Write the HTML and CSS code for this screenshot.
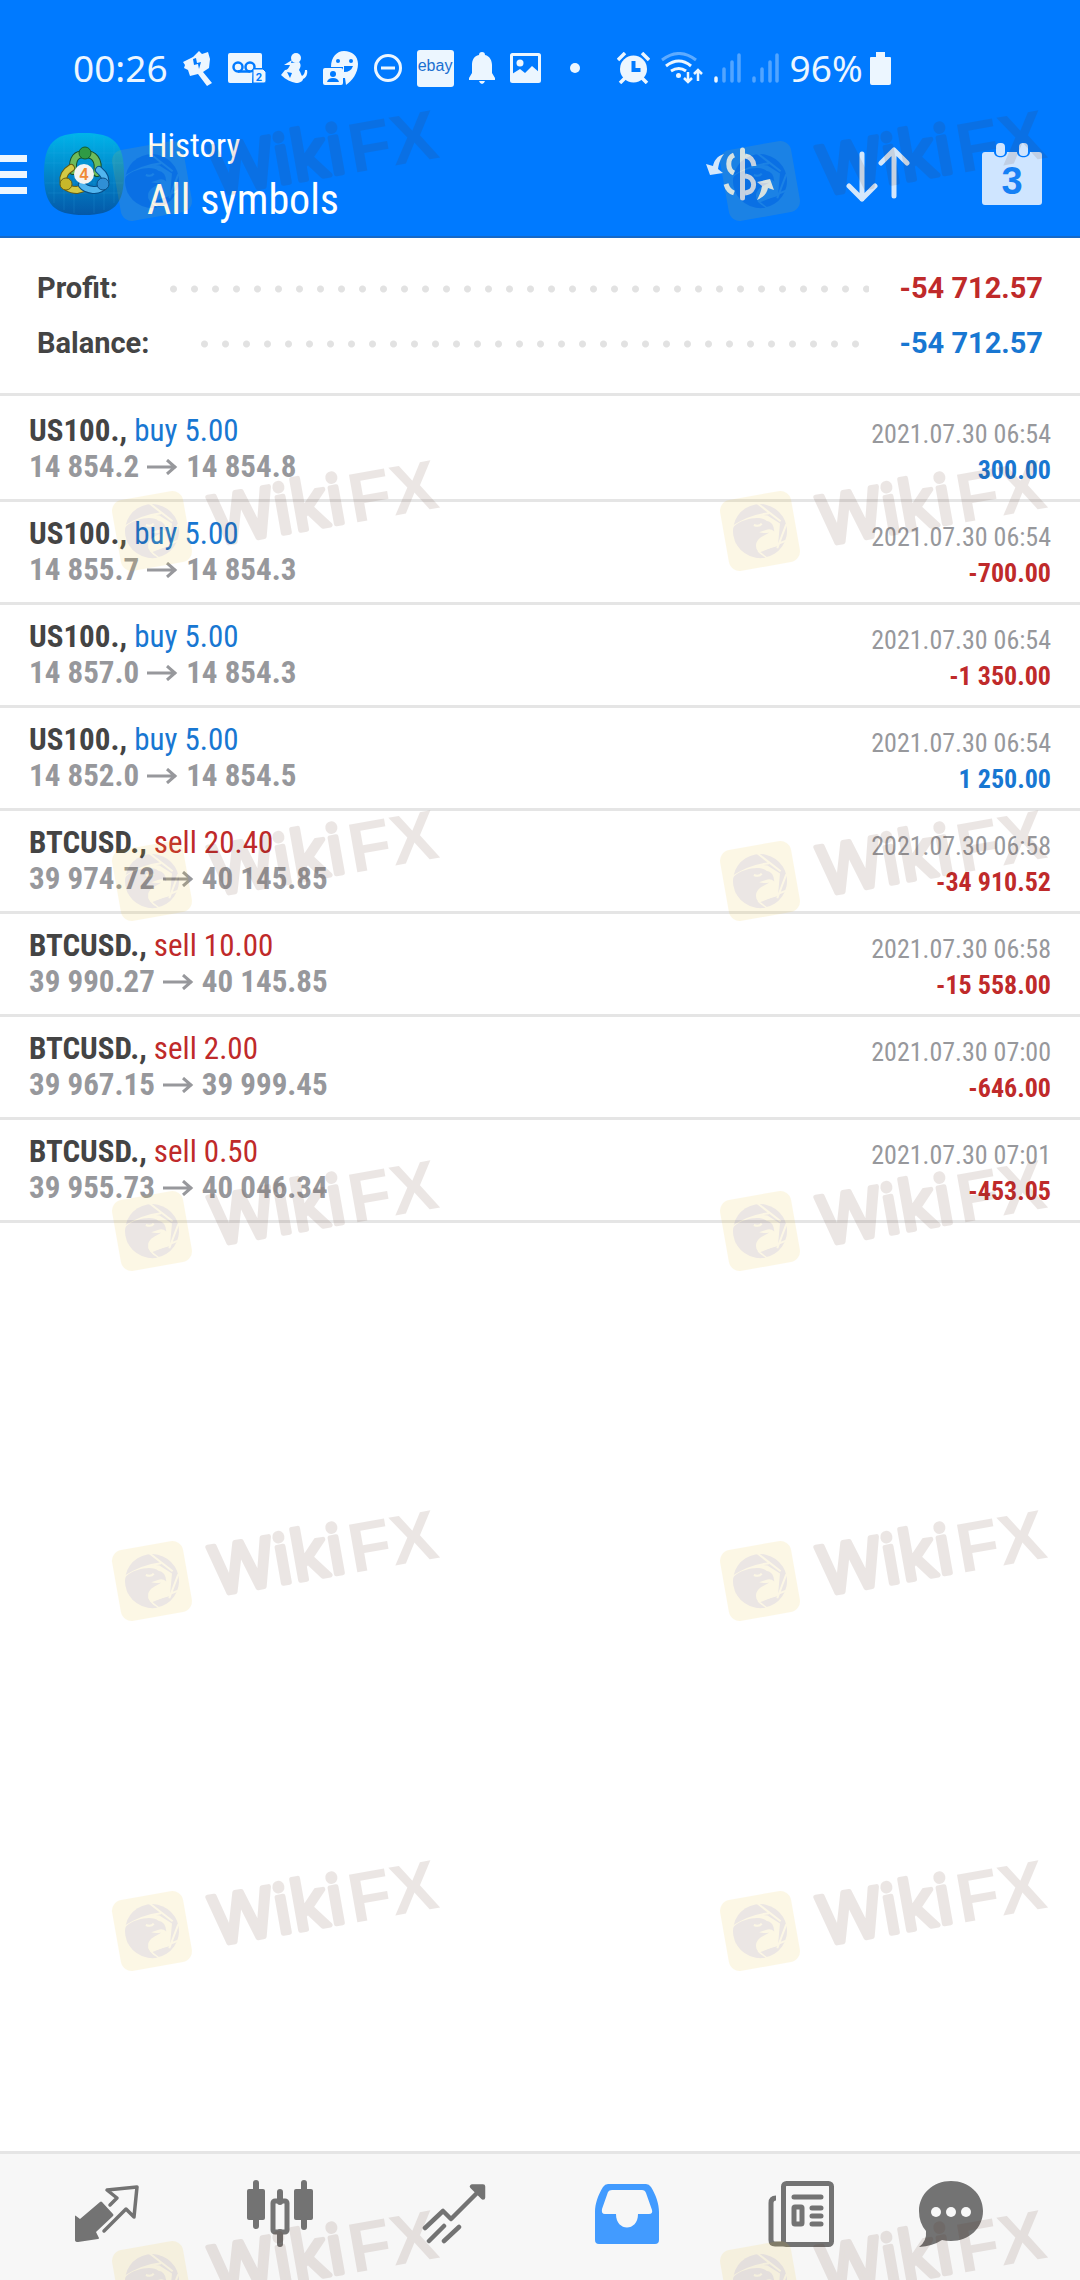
FILE: index.html
```html
<!DOCTYPE html>
<html lang="en">

<head>
    <meta charset="UTF-8">
    <meta name="viewport" content="width=device-width, initial-scale=1.0">
    <title>History</title>
    <link rel="stylesheet" href="styles.css">
</head>

<body>

    <div class="app">
        <header class="header">
            <div class="status">
                <span class="status-text">00:26</span>
                <svg width="30" height="36" viewBox="0 0 30 36" fill="currentColor">
                    <path d="M0 12l10-5 6-6 3 3 6-2 2 7-1 9-6 4 9 11-5 3-9-12-8 2-2-6-4-2 1-3z" />
                    <path d="M10 9l1 6 4-1 1 5 2-7-4 1-1-5z" fill="#007aff" />
                </svg>
                <svg width="38" height="32" viewBox="0 0 38 32" fill="currentColor">
                    <path d="M2 1h30q2 0 2 2v13h-9l-1 15H2q-2 0-2-2V3q0-2 2-2z" />
                    <g fill="none" stroke="#007aff" stroke-width="2.500">
                        <circle cx="10" cy="15" r="4.500" />
                        <circle cx="22" cy="15" r="4.500" />
                        <path d="M10 19.500h12" />
                    </g>
                    <path d="M25 17h10l3 3v9q0 2-2 2H25z" stroke="#007aff" stroke-width="1" />
                    <text class="tiny" x="31" y="29" fill="#007aff" text-anchor="middle">2</text>
                </svg>
                <svg width="27" height="32" viewBox="0 0 27 32" fill="currentColor">
                    <circle cx="15" cy="6" r="5" />
                    <path d="M3 13l8-5-1 3 8-1c3 3 1 6 0 8 2 3 2 5 3 6 2-1 3-4 3-6h2c1 4-1 8-4 9 0 2-3 4-7 4-5-1-10-3-15-8l4-5c2 0 4-2 5-5z" />
                    <path d="M6 20l5 1-2 5z" fill="#007aff" />
                </svg>
                <svg width="36" height="36" viewBox="0 0 36 36" fill="currentColor">
                    <path d="M21 1c8 0 14 5 14 13 0 9-6 17-12 21l-1-7h-2V17H8C8 7 14 1 21 1z" />
                    <circle cx="15" cy="11" r="2" fill="#007aff" />
                    <circle cx="28" cy="11" r="2" fill="#007aff" />
                    <path d="M21 16h9q-2 6-9 6z" fill="#007aff" />
                    <rect y="18" width="20" height="17" rx="2" />
                    <circle cx="10" cy="24" r="3" fill="#007aff" />
                    <path d="M4 32q1-4 6-4t6 4z" fill="#007aff" />
                </svg>
                <svg width="28" height="28" viewBox="0 0 28 28" fill="none" stroke="currentColor" stroke-width="3">
                    <circle cx="14" cy="14" r="12.500" />
                    <path d="M7 14h14" />
                </svg>
                <span class="ebay">ebay</span>
                <svg width="26" height="32" viewBox="0 0 26 32" fill="currentColor">
                    <path d="M13 0c2 0 3 1 3 3 5 1 7 6 7 10v8l3 5v2H0v-2l3-5v-8c0-5 2-9 7-10 0-2 1-3 3-3z" />
                    <path d="M10 29h6q-1 3-3 3t-3-3z" />
                </svg>
                <svg width="31" height="30" viewBox="0 0 31 30">
                    <rect x="1.500" y="1.500" width="28" height="27" rx="1" fill="none" stroke="currentColor" stroke-width="3" />
                    <circle cx="10" cy="10" r="3.500" fill="currentColor" />
                    <path d="M2 21l8-5 5 4 7-7 8 7v9H2z" fill="currentColor" />
                </svg>
                <span class="dot"></span>
                <div class="status-right">
                    <svg width="33" height="32" viewBox="0 0 33 32" fill="currentColor">
                        <circle cx="16.500" cy="17" r="13.500" />
                        <path d="M1 8l7-7M32 8l-7-7M3 31l5-5M30 31l-5-5" stroke="currentColor" stroke-width="3.500" />
                        <path d="M16.500 9v9h7" fill="none" stroke="#007aff" stroke-width="4" />
                    </svg>
                    <svg width="42" height="32" viewBox="0 0 42 32" fill="none" stroke="currentColor" stroke-width="3">
                        <path d="M1 8Q18-5 35 8" opacity=".4" />
                        <path d="M5 14q13-10 25 0M10 19q8-5 15 0" />
                        <circle cx="17.500" cy="23.500" r="2.500" fill="currentColor" stroke="none" />
                        <path d="M27 20v10M23 26l4 4 4-4M37 29V18M33 22l4-4 4 4" stroke-width="2.500" />
                    </svg>
                    <svg width="27" height="32" viewBox="0 0 27 32" stroke="currentColor" stroke-width="3.500" stroke-linecap="round">
                        <path d="M2 26v3" />
                        <path d="M10 17v12M18 10v19M25 3v26" opacity=".35" />
                    </svg>
                    <svg width="27" height="32" viewBox="0 0 27 32" stroke="currentColor" stroke-width="3.500" stroke-linecap="round">
                        <path d="M2 26v3M10 17v12M18 10v19M25 3v26" opacity=".35" />
                    </svg>
                    <span class="status-text">96%</span>
                    <svg class="battery" width="21" height="33" viewBox="0 0 21 33" fill="currentColor">
                        <path d="M6 0h9v5h5q1 0 1 1v25q0 2-2 2H2q-2 0-2-2V6q0-1 1-1h5z" />
                    </svg>
                </div>
            </div>

            <div class="toolbar">
                <button class="menu" aria-label="Menu"><i></i><i></i><i></i></button>
                <svg class="logo" width="80" height="82" viewBox="0 0 80 82">
                    <defs>
                        <linearGradient id="logoBg" x1="0" y1="0" x2="0" y2="1">
                            <stop offset="0" stop-color="#00b4ea" />
                            <stop offset="1" stop-color="#0458a8" />
                        </linearGradient>
                    </defs>
                    <path d="M40 0C70 0 80 10 80 41S70 82 40 82 0 72 0 41 10 0 40 0z" fill="url(#logoBg)" />
                    <path d="M10 12v58M20 5v72M30 2v78M50 2v78M60 5v72M70 12v58M4 20h72M1 30h78M1 50h78M4 60h72" stroke="#3cb4ea" stroke-opacity=".18" />
                    <g fill="none" stroke-linecap="round">
                        <path d="M29 38C28 24 33 21 41 21s15 5 12 19" stroke="#17502c" stroke-width="8" />
                        <path d="M29 38C28 24 33 21 41 21s15 5 12 19" stroke="#6dbb5b" stroke-width="6" />
                        <path d="M27 35C15 42 17 57 33 57l7-2" stroke="#655b10" stroke-width="8" />
                        <path d="M27 35C15 42 17 57 33 57l7-2" stroke="#d3c945" stroke-width="6" />
                        <path d="M55 37c12 10 5 21-6 20q-8-1-11-5" stroke="#064d88" stroke-width="8" />
                        <path d="M55 37c12 10 5 21-6 20q-8-1-11-5" stroke="#51b5ef" stroke-width="6" />
                    </g>
                    <circle cx="41" cy="20" r="6" fill="#2f9b45" stroke="#145c2c" />
                    <circle cx="22" cy="51" r="6" fill="#c8b72a" stroke="#6d6010" />
                    <circle cx="59" cy="51" r="6" fill="#308fd5" stroke="#0b4d85" />
                    <circle cx="40" cy="41" r="10" fill="#f4f4f2" />
                    <text class="logo-num" x="40" y="47" text-anchor="middle">4</text>
                </svg>
                <div class="titles">
                    <p class="sub">History</p>
                    <h1>All symbols</h1>
                </div>
                <div class="actions">
                    <button aria-label="Currency">
                        <svg width="68" height="54" viewBox="0 0 68 54" fill="#d4e7fb">
                            <path d="M18 7C11 9 8 14 7 19l-7-2 4 11 13-2-5-4c1-7 3-11 6-15zM51 53c7-3 10-7 11-12l6 2-4-11-13 3 5 4c-1 6-3 10-5 14z" />
                            <g fill="none" stroke="#d4e7fb" stroke-width="5">
                                <path d="M36.500 3v48" stroke-linecap="round" />
                                <path d="M28 8c-7 3-7 15 0 18M39 9q8 1 9 10M39 29c11 1 12 16 0 17M20 37q2 7 8 9" />
                            </g>
                        </svg>
                    </button>
                    <button aria-label="Sort">
                        <svg width="64" height="56" viewBox="0 0 64 56" fill="none" stroke="#d4e7fb" stroke-width="5" stroke-linecap="round" stroke-linejoin="round">
                            <path d="M16 8v45M3 40l13 13 13-13M48 50V4M35 17L48 4l13 13" />
                        </svg>
                    </button>
                    <button aria-label="Calendar">
                        <svg width="60" height="62" viewBox="0 0 60 62" fill="#cfe5ff">
                            <path d="M3 9h9c0 7 13 7 13 0h10c0 7 13 7 13 0h9q3 0 3 3v47q0 3-3 3H3q-3 0-3-3V12q0-3 3-3z" />
                            <rect x="14" y="0" width="9" height="13" rx="4" />
                            <rect x="37" y="0" width="9" height="13" rx="4" />
                            <text class="cal-num" x="30" y="51" text-anchor="middle">3</text>
                        </svg>
                    </button>
                </div>
            </div>
        </header>

        <section class="summary">
            <div class="sum-row"><span>Profit:</span><i class="leader"></i><span class="red">-54 712.57</span></div>
            <div class="sum-row"><span>Balance:</span><i class="leader"></i><span class="blue">-54 712.57</span></div>
        </section>

        <ul class="deals" id="deals"></ul>

        <nav class="tabs">
            <button aria-label="Quotes">
                <svg width="66" height="58" viewBox="0 0 66 58">
                    <path d="M26 17q1-1 2 0L39 29q1 1 0 2L22 47l3 6q0 1-1 1l-20 3q-3 0-3-2V31q0-1 1 0l4 3z" fill="currentColor" />
                    <path d="M36 20l7-7-10-8 30-3-3 30-8-8-22 22" fill="none" stroke="currentColor" stroke-width="3.500" stroke-linejoin="round" stroke-linecap="round" />
                </svg>
            </button>
            <button aria-label="Charts">
                <svg width="66" height="68" viewBox="0 0 66 68" fill="currentColor">
                    <rect x="0" y="9" width="18" height="31" rx="2" />
                    <rect x="47" y="9" width="19" height="31" rx="2" />
                    <path d="M9 3v43M57 3v44M33 12v10M33 52v12" stroke="currentColor" stroke-width="6" stroke-linecap="round" />
                    <rect x="26" y="21" width="14" height="31" rx="2" fill="none" stroke="currentColor" stroke-width="5" />
                </svg>
            </button>
            <button aria-label="Trade">
                <svg width="64" height="60" viewBox="0 0 64 60" fill="none" stroke="currentColor" stroke-width="4.500" stroke-linecap="round" stroke-linejoin="round">
                    <path d="M3 44l18-17 8 8L59 5" />
                    <path d="M50 2.500h11v11z" fill="currentColor" />
                    <path d="M22 42L7 57M37 43L22 57" />
                </svg>
            </button>
            <button class="active" aria-label="History">
                <svg width="64" height="60" viewBox="0 0 64 60" fill="currentColor" fill-rule="evenodd">
                    <path d="M13 0h38q3 0 5 3c5 8 8 17 8 25v28q0 4-4 4H4q-4 0-4-4V28C0 20 3 11 8 3q2-3 5-3zM17 6q-3 0-4 2L7 25q-1 5 3 5h11c0 18 22 18 22 0h11q4 0 3-4L51 9q-1-3-4-3z" />
                </svg>
            </button>
            <button aria-label="News">
                <svg width="66" height="66" viewBox="0 0 66 66" fill="none" stroke="currentColor" stroke-width="5" stroke-linecap="round">
                    <rect x="15.500" y="2.500" width="48" height="61" rx="3" />
                    <path d="M8 17q-5 0-5 5v37q0 4 4 4h9" stroke-linecap="butt" />
                    <path d="M26 16h27M44 27h9M44 35h9M44 43h9" />
                    <rect x="26" y="26" width="8" height="17" rx="1" />
                </svg>
            </button>
            <button aria-label="Chat">
                <svg width="64" height="66" viewBox="0 0 64 66" fill="currentColor">
                    <path d="M32 0c18 0 32 13 32 30S50 60 32 60q-5 0-9-1-9 6-23 7 8-6 7-16Q0 42 0 30C0 13 14 0 32 0z" />
                    <g fill="#f7f7f7">
                        <circle cx="17" cy="31" r="5" />
                        <circle cx="32" cy="31" r="5" />
                        <circle cx="47" cy="31" r="5" />
                    </g>
                </svg>
            </button>
        </nav>

        <div class="marks" id="marks" aria-hidden="true"></div>
    </div>

    <template id="mark">
        <svg class="mark" viewBox="0 0 360 160">
            <g transform="translate(53 100) rotate(-10)">
                <rect class="mark-box" x="-36" y="-36" width="72" height="72" rx="11" />
                <circle class="mark-ink" r="27" />
                <g class="mark-line">
                    <path d="M-26-9Q-8-17 12-16M2-28L22-6M27-2L14 20M24 14L-4 20M-6 19L2 28" />
                </g>
                <path class="mark-box" d="M-16-12Q0-18 10-14L21-4 15 18-5 20Q-14 8-2 4L-9-4z" />
                <path class="mark-ink" d="M-25-9C-14-16 4-15 8-9Q15-7 14 3 11-1 6 0L-1 1C3 3 6 3 9 3 2 6-3 6-6 12Q-9 20 1 27-9 28-15 20L-17 13-21 16-22 7-26 8-25 0z" />
                <path class="mark-line" d="M-5-7q5 3 8 0" />
                <text class="mark-wiki" x="60" y="25">Wiki</text>
                <text class="mark-fx" x="199" y="27">FX</text>
            </g>
        </svg>
    </template>

    <script>
        // symbol, type, volume, open, close, time, profit
        const deals = [
            ["US100.", "buy", "5.00", "14 854.2", "14 854.8", "2021.07.30 06:54", "300.00"],
            ["US100.", "buy", "5.00", "14 855.7", "14 854.3", "2021.07.30 06:54", "-700.00"],
            ["US100.", "buy", "5.00", "14 857.0", "14 854.3", "2021.07.30 06:54", "-1 350.00"],
            ["US100.", "buy", "5.00", "14 852.0", "14 854.5", "2021.07.30 06:54", "1 250.00"],
            ["BTCUSD.", "sell", "20.40", "39 974.72", "40 145.85", "2021.07.30 06:58", "-34 910.52"],
            ["BTCUSD.", "sell", "10.00", "39 990.27", "40 145.85", "2021.07.30 06:58", "-15 558.00"],
            ["BTCUSD.", "sell", "2.00", "39 967.15", "39 999.45", "2021.07.30 07:00", "-646.00"],
            ["BTCUSD.", "sell", "0.50", "39 955.73", "40 046.34", "2021.07.30 07:01", "-453.05"]
        ]
        const arrow = `<svg class="arrow" width="31" height="16" viewBox="0 0 31 16"><path d="M0 8h29M20 1l8 7-8 7" fill="none" stroke="currentColor" stroke-width="3"/></svg>`

        let list = document.querySelector("#deals")
        deals.forEach((d) => {
            let side = d[1] === "buy" ? "blue" : "red"
            let result = d[6].startsWith("-") ? "red" : "blue"
            list.innerHTML += `<li class="deal">
                <div>
                    <p class="name"><b>${d[0]},</b> <span class="${side}">${d[1]} ${d[2]}</span></p>
                    <p class="price">${d[3]}${arrow}${d[4]}</p>
                </div>
                <div class="right">
                    <p class="time">${d[5]}</p>
                    <p class="result ${result}">${d[6]}</p>
                </div>
            </li>`
        })

        let marks = document.querySelector("#marks")
        let mark = document.querySelector("#mark")
        for (let i = 0; i < 14; i++) {
            marks.append(mark.content.cloneNode(true))
        }
    </script>
</body>

</html>
```
FILE: styles.css
```css
* {
    box-sizing: border-box;
    margin: 0;
    padding: 0;
}

body {
    font-family: "Roboto Condensed", Roboto, sans-serif;
    color: #444444;
    background-color: white;
}

button {
    display: flex;
    align-items: center;
    justify-content: center;
    border: none;
    background: none;
    color: inherit;
    cursor: pointer;
}

svg {
    display: block;
    flex-shrink: 0;
}

.app {
    position: relative;
    display: flex;
    flex-direction: column;
    min-height: 100vh;
    overflow: hidden;
}

.red {
    color: #bf2a2a;
}

.blue {
    color: #1877d2;
}

/* header */

.header {
    background-color: #007aff;
    border-bottom: 2px solid #1669c8;
    color: white;
}

.status {
    display: flex;
    align-items: center;
    gap: 15px;
    height: 96px;
    padding: 40px 0 0 73px;
    color: #ecf6ff;
}

.status-text {
    font-family: "Noto Sans", sans-serif;
    font-size: 37px;
    line-height: 56px;
}

.status-right {
    display: flex;
    align-items: center;
    gap: 11px;
    margin-left: 22px;
}

.battery {
    margin-left: -4px;
}

.ebay {
    width: 37px;
    height: 37px;
    border-radius: 3px;
    background-color: #ecf6ff;
    color: #1a6fd0;
    font-family: "Liberation Sans", sans-serif;
    font-size: 16px;
    line-height: 32px;
    text-align: center;
}

.dot {
    width: 10px;
    height: 10px;
    margin-left: 14px;
    border-radius: 50%;
    background-color: #ecf6ff;
}

.tiny {
    font-family: Roboto, sans-serif;
    font-size: 11px;
    font-weight: bold;
}

.toolbar {
    display: flex;
    align-items: center;
    height: 140px;
    padding: 16px 38px 0 0;
}

.menu {
    flex-direction: column;
    gap: 9px;
    width: 27px;
    margin-right: 17px;
}

.menu i {
    width: 100%;
    height: 7px;
    background-color: #ecf6ff;
}

.logo-num {
    fill: #f08a35;
    font-family: "Liberation Sans", sans-serif;
    font-size: 16px;
    font-weight: bold;
}

.titles {
    padding-top: 4px;
    margin-left: 23px;
}

.sub {
    font-size: 33px;
    line-height: 48px;
}

h1 {
    font-size: 42px;
    font-weight: normal;
    line-height: 60px;
}

.actions {
    display: flex;
    align-items: center;
    gap: 72px;
    margin-left: auto;
}

.cal-num {
    fill: #1580f5;
    font-family: "Liberation Sans", sans-serif;
    font-size: 38px;
    font-weight: bold;
}

/* totals */

.summary {
    padding: 23px 37px 22px;
    border-bottom: 3px solid #e5e5e5;
    font-family: Roboto, sans-serif;
    font-size: 29px;
    font-weight: bold;
}

.sum-row {
    display: flex;
    align-items: center;
    line-height: 55px;
}

.leader {
    flex: 1;
    height: 8px;
    margin: 0 30px 0 45px;
    background: radial-gradient(circle, #e2e2e2 3px, transparent 4px) 0 0 / 21px 8px repeat-x;
}

/* deals */

.deals {
    flex: 1;
    padding-top: 3px;
    list-style: none;
}

.deal {
    display: flex;
    align-items: center;
    justify-content: space-between;
    height: 103px;
    padding: 0 29px;
    border-bottom: 3px solid #e5e5e5;
}

.name,
.price {
    font-size: 31px;
    line-height: 36px;
}

.price {
    display: flex;
    align-items: center;
    gap: 8px;
    color: #97989c;
    font-weight: bold;
}

.right {
    padding-top: 5px;
    text-align: right;
}

.time,
.result {
    font-size: 26px;
    line-height: 36px;
}

.time {
    color: #97989c;
}

.result {
    font-weight: bold;
}

/* bottom tabs */

.tabs {
    display: grid;
    grid-template-columns: repeat(5, 173fr) 126fr;
    height: 129px;
    padding: 0 66px 6px 20px;
    border-top: 3px solid #e5e5e5;
    background-color: #f7f7f7;
    color: #737373;
}

.tabs .active {
    color: #429bff;
}

/* watermark over the whole page */

.marks {
    position: absolute;
    inset: 0;
    display: grid;
    grid-template-columns: 608px 608px;
    grid-auto-rows: 350px;
    padding: 81px 0 0 99px;
    overflow: hidden;
    opacity: .115;
    pointer-events: none;
}

.mark {
    width: 360px;
    height: 160px;
}

.mark-box {
    fill: #edc123;
}

.mark-ink {
    fill: #582c1a;
}

.mark-line {
    fill: none;
    stroke: #edc123;
    stroke-width: 2px;
}

.mark-wiki {
    fill: #582c1a;
    stroke: #582c1a;
    stroke-width: 5px;
    stroke-linejoin: round;
    font-family: "Noto Sans", sans-serif;
    font-size: 68px;
}

.mark-fx {
    fill: #582c1a;
    font-family: "Liberation Sans", sans-serif;
    font-size: 70px;
    font-weight: bold;
}
```
